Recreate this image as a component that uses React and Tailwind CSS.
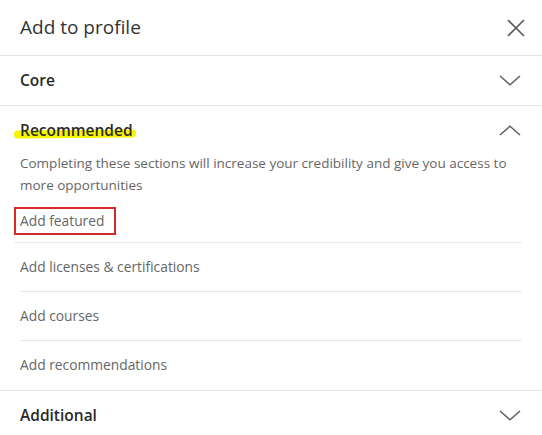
import { useState } from "react";

function Chevron({ up }) {
    return (
        <svg width="22" height="11" viewBox="0 0 22 11" fill="none" className="text-[#5e5e5e]">
            {up ? (
                <path d="M1 10 L11 1.2 L21 10" stroke="currentColor" strokeWidth="1.5" />
            ) : (
                <path d="M1 1 L11 9.8 L21 1" stroke="currentColor" strokeWidth="1.5" />
            )}
        </svg>
    );
}

function SectionRow({ title, up, children }) {
    return (
        <div className="flex items-center justify-between px-5 h-[49px]">
            <span className="text-[15.5px] font-semibold text-[#2a2a2a]">{children || title}</span>
            <span className="pr-[1px]">
                <Chevron up={up} />
            </span>
        </div>
    );
}

export default function App() {
    const [items] = useState([
        "Add licenses & certifications",
        "Add courses",
        "Add recommendations",
    ]);

    return (
        <div
            className="w-[542px] h-[435px] bg-white overflow-hidden"
            style={{ fontFamily: '"Open Sans", "Noto Sans", sans-serif' }}
        >
            {/* HEADER */}
            <div className="flex items-center justify-between pl-5 pr-[17px] h-[56px] border-b border-[#e4e4e4]">
                <h1 className="text-[19px] text-[#333]">Add to profile</h1>
                <svg width="18" height="18" viewBox="0 0 18 18" className="text-[#555]">
                    <path d="M1 1 L17 17 M17 1 L1 17" stroke="currentColor" strokeWidth="1.6" />
                </svg>
            </div>

            {/* CORE */}
            <div className="border-b border-[#e4e4e4]">
                <SectionRow title="Core" />
            </div>

            {/* RECOMMENDED */}
            <div className="border-b border-[#e4e4e4]">
                <SectionRow up>
                    <span className="relative inline-block">
                        <span className="absolute left-[-6px] right-[-3px] top-[11px] h-[8px] bg-[#f5f500] rounded-sm -rotate-[0.5deg]"></span>
                        <span className="relative">Recommended</span>
                    </span>
                </SectionRow>
                <p className="px-5 -mt-[3px] text-[13.5px] leading-[22px] text-[#666]">
                    Completing these sections will increase your credibility and give you access to
                    more opportunities
                </p>
                <div className="px-5">
                    <div className="border-b border-[#e9e9e9] pt-[11px] pb-[7px] -ml-[6px]">
                        <span className="inline-block border-2 border-[#d42a2a] pl-[4px] pr-[10px] h-[28px] leading-[24px] text-[13.8px] text-[#666]">
                            Add featured
                        </span>
                    </div>
                    {items.map((item, i) => (
                        <div
                            key={item}
                            className={
                                "h-[49px] flex items-center text-[13.8px] text-[#666] " +
                                (i < items.length - 1 ? "border-b border-[#e9e9e9]" : "")
                            }
                        >
                            {item}
                        </div>
                    ))}
                </div>
            </div>

            {/* ADDITIONAL */}
            <SectionRow title="Additional" />
        </div>
    );
}
